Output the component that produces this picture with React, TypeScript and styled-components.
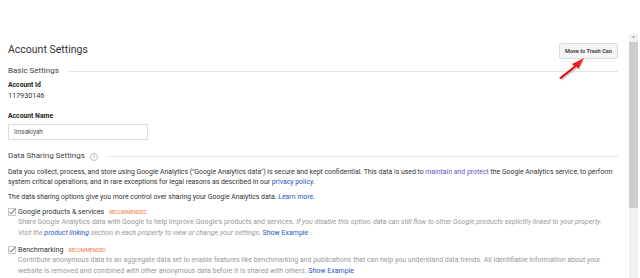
import React from "react";
import styled, { createGlobalStyle } from "styled-components";

const Global = createGlobalStyle`
  html, body { margin: 0; padding: 0; background: #fff; overflow: hidden; }
  body { font-family: Roboto, "Liberation Sans", Arial, sans-serif; color: #333; }
`;

const Page = styled.div`
  display: flex;
  width: 640px;
  height: 278px;
`;

const Main = styled.div`
  width: 610px;
  padding: 0 11px 0 8px;
  display: flex;
  flex-direction: column;
`;

const Scrollbar = styled.div`
  margin-top: 34px;
  width: 9px;
  display: flex;
  flex-direction: column;
  background: #f0f0f0;
`;

const ScrollArrow = styled.div`
  height: 8px;
  background: #f0f0f0;
  color: #555;
  font-size: 6px;
  line-height: 8px;
  text-align: center;
`;

const ScrollThumb = styled.div`
  height: 166px;
  background: #cdcdcd;
`;

const HeaderRow = styled.div`
  margin-top: 43px;
  display: flex;
  justify-content: space-between;
  align-items: flex-start;
  position: relative;
`;

const Title = styled.h1`
  margin: 0;
  font-weight: 400;
  font-size: 10.5px;
  line-height: 12px;
  color: #333;
  margin-top: 1px;
`;

const TrashButton = styled.button`
  width: 59px;
  height: 16px;
  padding: 0;
  background: #f5f5f5;
  border: 1px solid #dcdcdc;
  border-radius: 2px;
  font-family: Roboto, Arial, sans-serif;
  font-size: 5.6px;
  font-weight: 700;
  color: #444;
`;

const Arrow = styled.svg`
  position: absolute;
  right: 30px;
  top: 14px;
`;

const SectionHead = styled.div<{ $mt: number }>`
  display: flex;
  align-items: center;
  gap: 9px;
  margin-top: ${(p) => p.$mt}px;
  font-size: 8px;
  line-height: 10px;
  color: #444;
`;

const Rule = styled.div`
  flex: 1;
  height: 1px;
  background: #e4e4e4;
`;

const Help = styled.span`
  display: inline-flex;
  align-items: center;
  justify-content: center;
  width: 6px;
  height: 6px;
  border: 0.7px solid #bbb;
  border-radius: 50%;
  font-size: 5px;
  line-height: 6px;
  color: #999;
  margin-left: -4px;
  margin-top: 1px;
`;

const FieldLabel = styled.div<{ $mt: number }>`
  margin-top: ${(p) => p.$mt}px;
  font-size: 6.8px;
  font-weight: 700;
  line-height: 8px;
  color: #222;
`;

const FieldValue = styled.div`
  margin-top: 3px;
  font-size: 7.2px;
  line-height: 8px;
  color: #333;
`;

const Input = styled.div`
  margin-top: 4px;
  width: 133px;
  height: 14px;
  border: 1px solid #ddd;
  padding-left: 5px;
  font-size: 6.4px;
  line-height: 14px;
  color: #555;
`;

const Para = styled.p<{ $mt: number }>`
  margin: ${(p) => p.$mt}px 0 0;
  font-size: 6.9px;
  line-height: 9.5px;
  color: #333;
`;

const Link = styled.span<{ $visited?: boolean }>`
  color: ${(p) => (p.$visited ? "#6a52c8" : "#2a56c6")};
`;

const Option = styled.div<{ $mt: number }>`
  margin-top: ${(p) => p.$mt}px;
  display: grid;
  grid-template-columns: 10px 1fr;
`;

const Check = styled.svg`
  margin-top: 1px;
`;

const OptionTitle = styled.div`
  font-size: 7.1px;
  line-height: 10px;
  color: #333;
  display: flex;
  align-items: baseline;
  gap: 5px;
`;

const Badge = styled.span`
  font-size: 5px;
  color: #f0763a;
`;

const Desc = styled.div`
  grid-column: 2;
  font-size: 7px;
  line-height: 11px;
  color: #999;
`;

const Em = styled.em`
  color: #999;
`;

const CheckBox = () => (
  <Check width="8" height="8" viewBox="0 0 8 8">
    <rect x="0.5" y="0.5" width="7" height="7" fill="#fff" stroke="#bbb" strokeWidth="0.8" />
    <path d="M1.6 4.2 L3.2 5.8 L7.4 0.8" fill="none" stroke="#555" strokeWidth="1" />
  </Check>
);

export default function App() {
  return (
    <>
      <Global />
      <Page>
        <Main>
          <HeaderRow>
            <Title>Account Settings</Title>
            <TrashButton>Move to Trash Can</TrashButton>
            <Arrow width="30" height="24" viewBox="0 0 30 24">
              <defs>
                <linearGradient id="ag" x1="0" y1="1" x2="1" y2="0">
                  <stop offset="0" stopColor="#c00" />
                  <stop offset="1" stopColor="#ff2a2a" />
                </linearGradient>
              </defs>
              <path d="M2.5 22.5 L17.5 10.5 L15.5 8.5 L25.5 3.5 L21.5 13 L19.5 11.5 L4 23.5 Z" fill="#999" opacity="0.45" />
              <path d="M1 21 L16 9 L14 7 L26 1 L20.5 11.5 L18.5 9.8 L3 22 Z" fill="url(#ag)" />
            </Arrow>
          </HeaderRow>
          <SectionHead $mt={7}>
            <span>Basic Settings</span>
            <Rule />
          </SectionHead>
          <FieldLabel $mt={5}>Account Id</FieldLabel>
          <FieldValue>117930146</FieldValue>
          <FieldLabel $mt={12}>Account Name</FieldLabel>
          <Input>Imsakiyah</Input>
          <SectionHead $mt={11}>
            <span>Data Sharing Settings</span>
            <Help>?</Help>
            <Rule />
          </SectionHead>
          <Para $mt={7}>
            Data you collect, process, and store using Google Analytics ("Google Analytics data") is secure and kept
            confidential. This data is used to <Link $visited>maintain and protect</Link> the Google Analytics service,
            to perform system critical operations, and in rare exceptions for legal reasons as described in our{" "}
            <Link>privacy policy</Link>.
          </Para>
          <Para $mt={6}>
            The data sharing options give you more control over sharing your Google Analytics data.{" "}
            <Link>Learn more.</Link>
          </Para>
          <Option $mt={4}>
            <CheckBox />
            <OptionTitle>
              Google products &amp; services <Badge>RECOMMENDED</Badge>
            </OptionTitle>
            <Desc>
              Share Google Analytics data with Google to help improve Google's products and services.{" "}
              <Em>
                If you disable this option, data can still flow to other Google products explicitly linked to your
                property.
                <br />
                Visit the <Link>product linking</Link> section in each property to view or change your settings.
              </Em>{" "}
              <Link>Show Example</Link>
            </Desc>
          </Option>
          <Option $mt={6}>
            <CheckBox />
            <OptionTitle>
              Benchmarking <Badge>RECOMMENDED</Badge>
            </OptionTitle>
            <Desc>
              Contribute anonymous data to an aggregate data set to enable features like benchmarking and publications
              that can help you understand data trends. All identifiable information about your
              <br />
              website is removed and combined with other anonymous data before it is shared with others.{" "}
              <Link>Show Example</Link>
            </Desc>
          </Option>
        </Main>
        <Scrollbar>
          <ScrollArrow>^</ScrollArrow>
          <ScrollThumb />
        </Scrollbar>
      </Page>
    </>
  );
}
